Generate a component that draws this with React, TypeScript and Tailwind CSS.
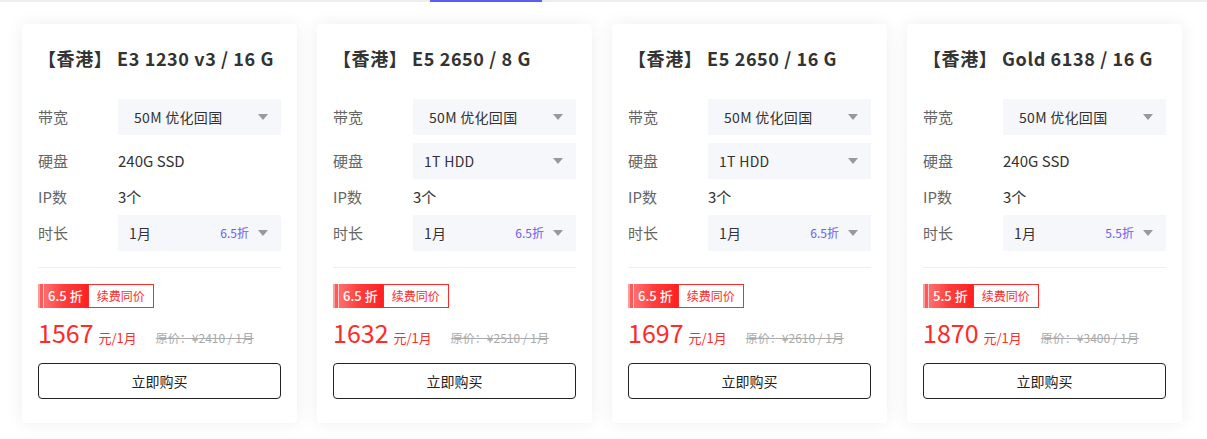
import React from "react";

type Plan = {
    id: number,
    title: string,
    bandwidth: string,
    disk: string,
    diskSelect: boolean,
    ips: string,
    discount: string,
    price: string,
    original: string,
}

const plans: Plan[] = [
    { id: 1, title: "E3 1230 v3 / 16 G", bandwidth: "50M 优化回国", disk: "240G SSD", diskSelect: false, ips: "3个", discount: "6.5", price: "1567", original: "2410" },
    { id: 2, title: "E5 2650 / 8 G", bandwidth: "50M 优化回国", disk: "1T HDD", diskSelect: true, ips: "3个", discount: "6.5", price: "1632", original: "2510" },
    { id: 3, title: "E5 2650 / 16 G", bandwidth: "50M 优化回国", disk: "1T HDD", diskSelect: true, ips: "3个", discount: "6.5", price: "1697", original: "2610" },
    { id: 4, title: "Gold 6138 / 16 G", bandwidth: "50M 优化回国", disk: "240G SSD", diskSelect: false, ips: "3个", discount: "5.5", price: "1870", original: "3400" },
];

const Caret = () => (
    <svg width="10" height="6" viewBox="0 0 10 6" className="shrink-0">
        <path d="M0 0 L10 0 L5 6 Z" fill="#999" />
    </svg>
);

const Select = ({ children, extra, pl }: { children: React.ReactNode, extra?: string, pl: string }) => (
    <div className={`flex-1 h-9 bg-[#f6f7fb] flex items-center pr-[13px] ${pl}`}>
        <span className="flex-1 text-[14px] text-[#333] tracking-[0.3px]">{children}</span>
        {extra && <span className="text-[12px] text-[#6a5cf0] mr-[9px]">{extra}</span>}
        <Caret />
    </div>
);

const Row = ({ label, children, tall = true }: { label: string, children: React.ReactNode, tall?: boolean }) => (
    <div className={`flex items-center ${tall ? "h-9" : "h-5"}`}>
        <span className="w-20 text-[15px] text-[#666]">{label}</span>
        {children}
    </div>
);

const Card = ({ p }: { p: Plan }) => (
    <div className="w-[275px] bg-white rounded-[4px] shadow-[0_0_18px_rgba(0,0,0,0.07)] px-4 pt-[21px] pb-6 flex flex-col">
        <div className="text-[18px] font-bold text-[#333] leading-[26px] tracking-[0.6px]">【香港】 {p.title}</div>
        <div className="mt-7 flex flex-col gap-2">
            <Row label="带宽">
                <Select pl="pl-4">{p.bandwidth}</Select>
            </Row>
            <Row label="硬盘">
                {p.diskSelect
                    ? <Select pl="pl-[11px]">{p.disk}</Select>
                    : <span className="text-[15px] text-[#333]">{p.disk}</span>}
            </Row>
            <Row label="IP数" tall={false}>
                <span className="text-[15px] text-[#333]">{p.ips}</span>
            </Row>
            <Row label="时长">
                <Select pl="pl-[11px]" extra={`${p.discount}折`}>1月</Select>
            </Row>
        </div>
        <div className="mt-4 h-px bg-[#eee]" />
        <div className="mt-4 flex h-6">
            <div className="flex items-stretch bg-gradient-to-r from-[#ff7a7a] via-[#ff3d3d] to-[#ff1f1f]">
                <div className="w-[2px] bg-[#ff9c9c]" />
                <div className="w-[3px] bg-[#ff5a5a]" />
                <div className="w-px bg-[#ffd0d0]" />
                <span className="pl-[4px] pr-[5px] flex items-center text-[13px] text-white font-medium">{p.discount} 折</span>
            </div>
            <span className="px-[8px] flex items-center border border-[#ff2a2a] text-[12px] text-[#ff2a2a] bg-white">续费同价</span>
        </div>
        <div className="mt-2 h-8 flex items-baseline">
            <span className="text-[25px] text-[#ff2a2a] leading-8">{p.price}</span>
            <span className="ml-[5px] text-[13px] text-[#ff2a2a]">元/1月</span>
            <span className="ml-[19px] text-[12px] text-[#aaa] line-through">原价：¥{p.original} / 1月</span>
        </div>
        <button className="mt-[15px] h-9 w-full border border-[#222] rounded-[4px] text-[14px] text-[#222] bg-white">立即购买</button>
    </div>
);

export default function App() {
    return (
        <div className="w-[1207px] h-[439px] bg-white font-['Noto_Sans_CJK_SC','Noto_Sans',sans-serif] overflow-hidden">
            <div className="flex h-[2px] bg-[#eee]">
                <div className="w-[430px]" />
                <div className="w-[112px] bg-[#5b5bf6]" />
            </div>
            <div className="flex gap-5 pl-[22px] mt-[22px]">
                {plans.map((p) => <Card key={p.id} p={p} />)}
            </div>
        </div>
    );
}
